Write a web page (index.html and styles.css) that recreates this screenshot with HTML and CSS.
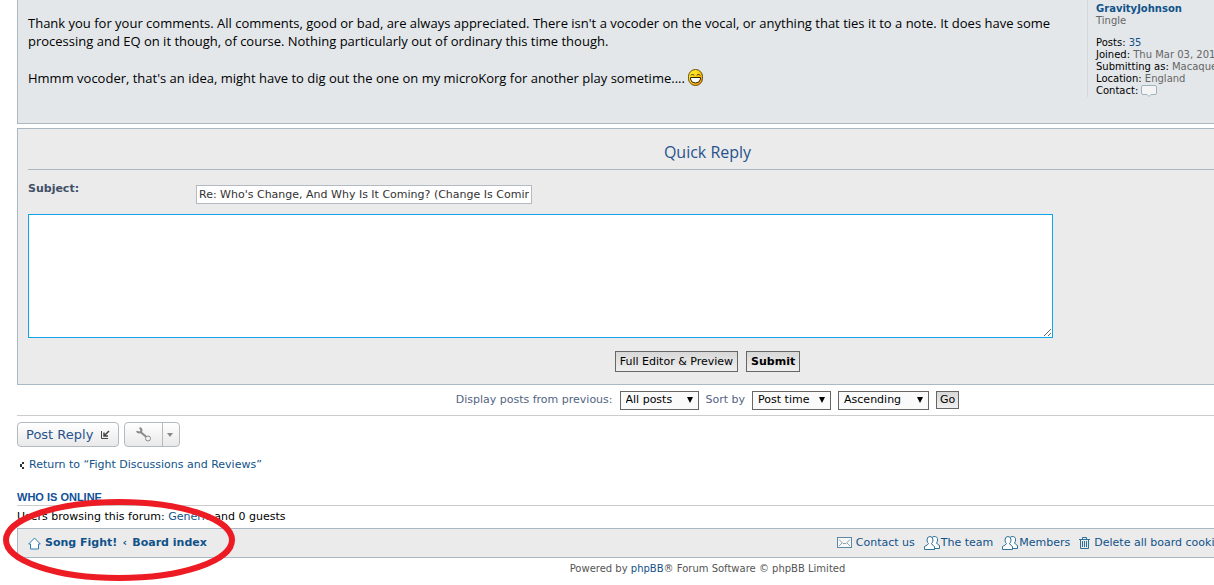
FILE: index.html
```html
<!DOCTYPE html>
<html lang="en">

<head>
    <meta charset="UTF-8">
    <meta name="viewport" content="width=device-width, initial-scale=1.0">
    <title>Song Fight! - View topic</title>
    <link rel="stylesheet" href="styles.css">
</head>

<body>
    <div class="wrap">
        <div class="post">
            <div class="postbody">
                <p>Thank you for your comments. All comments, good or bad, are always appreciated. There isn't a vocoder on the vocal, or anything that ties it to a note. It does have some<br>
                    processing and EQ on it though, of course. Nothing particularly out of ordinary this time though.</p>
                <p>Hmmm vocoder, that's an idea, might have to dig out the one on my microKorg for another play sometime....
                    <svg class="smiley" width="15" height="17" viewBox="0 0 15 17">
                        <defs>
                            <linearGradient id="face" x1="0" y1="0" x2="1" y2="1">
                                <stop offset="0.3" stop-color="#ffe620" />
                                <stop offset="1" stop-color="#f08a00" />
                            </linearGradient>
                        </defs>
                        <rect x="0.5" y="0.5" width="14" height="16" rx="7" fill="url(#face)" stroke="#6b4a10" />
                        <path d="M3 6.5L4.5 5L6 6.5M9 6.5L10.500 5L12 6.500" fill="none" stroke="#222" />
                        <path d="M2.500 8.500H12.500V10Q12 14 7.500 14T2.500 10Z" fill="#fff" stroke="#332200" />
                    </svg>
                </p>
            </div>
            <dl class="profile">
                <dt><a href="#" class="username">GravityJohnson</a></dt>
                <dd class="rank">Tingle</dd>
                <dd><b>Posts:</b> <a href="#">35</a></dd>
                <dd><b>Joined:</b> Thu Mar 03, 2016</dd>
                <dd><b>Submitting as:</b> Macaque</dd>
                <dd><b>Location:</b> England</dd>
                <dd><b>Contact:</b>
                    <a href="#" aria-label="Contact GravityJohnson"><svg class="bubble" width="16" height="12" viewBox="0 0 16 12">
                            <path d="M2 0.500H14Q15.500 0.500 15.500 2V8Q15.500 9.500 14 9.500H10L8 11.500L6 9.500H2Q0.500 9.500 0.500 8V2Q0.500 0.500 2 0.500Z" fill="#f4f4f4" stroke="#9db3c0" />
                        </svg></a>
                </dd>
            </dl>
        </div>

        <form class="panel">
            <h2>Quick Reply</h2>
            <div class="subject">
                <label for="subject">Subject:</label>
                <input type="text" id="subject" value="Re: Who's Change, And Why Is It Coming? (Change Is Coming)">
            </div>
            <textarea class="message" aria-label="Message"></textarea>
            <div class="buttons">
                <button type="button">Full Editor &amp; Preview</button>
                <button type="submit" class="submit">Submit</button>
            </div>
        </form>

        <form class="sort">
            <label for="days">Display posts from previous:</label>
            <span class="select"><select id="days" class="short">
                    <option>All posts</option>
                </select></span>
            <label for="key">Sort by</label>
            <span class="select"><select id="key" class="short">
                    <option>Post time</option>
                </select></span>
            <span class="select"><select class="long" aria-label="Order">
                    <option>Ascending</option>
                </select></span>
            <button type="button">Go</button>
        </form>

        <div class="actions">
            <button type="button" class="reply">Post Reply
                <svg width="10" height="10" viewBox="0 0 10 10">
                    <path d="M1.500 1V8.500H8" fill="none" stroke="#444" />
                    <path d="M9 1L4 6M4 2.500V6H8" fill="none" stroke="#444" stroke-width="1.500" />
                </svg>
            </button>
            <button type="button" class="tools" aria-label="Topic tools">
                <span class="wrench"><svg width="16" height="15" viewBox="0 0 16 15">
                        <path d="M4 4.500L11 10.500" stroke="#8a8a8a" stroke-width="2" />
                        <path d="M3.500 1Q5.500 1.500 5.500 3.500Q5 5.500 3 5.500Q1.500 5.500 1 4" fill="none" stroke="#8a8a8a" stroke-width="2" />
                        <circle cx="12" cy="11.500" r="2.500" fill="#f4f4f4" stroke="#8a8a8a" stroke-width="1" />
                    </svg></span>
                <span class="caret"></span>
            </button>
        </div>

        <a href="#" class="return"><svg width="4" height="7" viewBox="0 0 4 7">
                <path d="M2 0H4V2H2ZM0 2H2V5H0ZM2 5H4V7H2Z" fill="#333" />
            </svg>Return to “Fight Discussions and Reviews”</a>

        <h3>Who is online</h3>
        <p class="online">Users browsing this forum: <a href="#">Generic</a> and 0 guests</p>

        <div class="navbar">
            <a href="#" class="crumb"><svg width="13" height="13" viewBox="0 0 13 13">
                    <path d="M6.500 1L12.300 7H10.500V12H2.500V7H0.700Z" fill="#fff" stroke="#2a80b0" stroke-linejoin="round" />
                </svg>Song Fight!</a>
            <span class="sep">‹</span>
            <a href="#" class="crumb">Board index</a>
            <ul class="links">
                <li><a href="#"><svg width="15" height="12" viewBox="0 0 15 12">
                            <rect x="0.500" y="0.500" width="14" height="10" fill="#f8f8f8" stroke="#5b8aa8" />
                            <path d="M2 2.500L6 6.500H9L13 2.500M2 9L5 6M13 9L10 6" fill="none" stroke="#8fa5b3" />
                        </svg>Contact us</a></li>
                <li><a href="#" class="tight"><svg width="16" height="14" viewBox="0 0 16 14">
                            <g fill="#fff" stroke="#2f7299">
                                <path d="M10 0.500Q14 0.500 13.500 4Q13.500 6 12.500 7Q13 8 15.500 9.500V12.500H9L7 6Q6.500 1 10 0.500Z" />
                                <path d="M6 0.500Q9 0.500 9 4Q9 6.500 7.500 7.500Q8 9 10.500 10.500V13.500H0.500V10.500Q4 9 4.500 7.500Q3 6.500 3 4Q3 0.500 6 0.500Z" />
                            </g>
                        </svg>The team</a></li>
                <li><a href="#" class="tight"><svg width="16" height="14" viewBox="0 0 16 14">
                            <g fill="#fff" stroke="#2f7299">
                                <path d="M10 0.500Q14 0.500 13.500 4Q13.500 6 12.500 7Q13 8 15.500 9.500V12.500H9L7 6Q6.500 1 10 0.500Z" />
                                <path d="M6 0.500Q9 0.500 9 4Q9 6.500 7.500 7.500Q8 9 10.500 10.500V13.500H0.500V10.500Q4 9 4.500 7.500Q3 6.500 3 4Q3 0.500 6 0.500Z" />
                            </g>
                        </svg>Members</a></li>
                <li><a href="#"><svg width="11" height="12" viewBox="0 0 11 12">
                            <path d="M0 2.500H11M3.500 2V0.500H7.500V2M1.500 3V11.500H9.500V3M3.500 4V10M5.500 4V10M7.500 4V10" fill="none" stroke="#2f7299" />
                        </svg>Delete all board cookies</a></li>
            </ul>
        </div>
        <p class="copyright">Powered by <a href="#">phpBB</a>® Forum Software © phpBB Limited</p>
    </div>

    <!-- red marker round the breadcrumbs -->
    <svg class="marker" width="234" height="84" viewBox="0 0 234 84">
        <ellipse cx="117" cy="42" rx="113" ry="38" fill="none" stroke="#ed1c24" stroke-width="6" />
    </svg>
</body>

</html>
```
FILE: styles.css
```css
* {
    box-sizing: border-box;
}

body {
    position: relative;
    margin: 0;
    overflow: hidden;
    background: #fff;
    color: #536482;
    font: 11px/14px Verdana, "DejaVu Sans", sans-serif;
}

/* the board is wider than the window */
.wrap {
    margin: 0 -184px 0 17px;
}

a {
    color: #105289;
    text-decoration: none;
}

p,
h2,
h3,
dl,
dd,
ul {
    margin: 0;
    padding: 0;
}

button,
input,
select,
textarea {
    margin: 0;
    font: inherit;
}

.post {
    display: flex;
    justify-content: space-between;
    height: 124px;
    padding: 0 10px;
    background: #e3e7ea;
    border: 1px solid #a9b8c2;
    border-top: 0;
}

.postbody {
    padding-top: 14px;
    color: #000;
    font: 13px/18px "Trebuchet MS", "Open Sans", sans-serif;
    white-space: nowrap;
}

.postbody p {
    margin-bottom: 19px;
}

.smiley {
    vertical-align: -3px;
}

.profile {
    flex: 0 0 300px;
    height: 97px;
    padding: 3px 0 0 8px;
    border-left: 1px solid #d3dade;
    color: #666;
    font-size: 10px;
    line-height: 12px;
}

.profile b {
    color: #000;
    font-weight: normal;
}

.profile .username {
    font-weight: bold;
}

.rank {
    margin-bottom: 10px;
}

.bubble {
    vertical-align: -3px;
}

.panel {
    margin-top: 4px;
    padding: 12px 10px;
    background: #ebebeb;
    border: 1px solid #a9b8c2;
}

.panel h2 {
    padding-bottom: 6px;
    border-bottom: 1px solid #a9b8c2;
    color: #28538c;
    font: 16px/22px "Trebuchet MS", "Open Sans", sans-serif;
    text-align: center;
}

.subject {
    display: flex;
    align-items: flex-start;
    padding: 12px 0 10px;
}

.subject label {
    width: 168px;
    color: #425067;
    font-weight: bold;
}

.subject input {
    width: 336px;
    height: 19px;
    margin-top: 3px;
    padding: 2px;
    border: 1px solid #b4bac0;
    color: #333;
}

.message {
    display: block;
    width: 100%;
    max-width: 1025px;
    height: 124px;
    border: 1px solid #11a3ea;
    outline: 0;
}

.buttons {
    display: flex;
    justify-content: center;
    gap: 8px;
    padding-top: 13px;
}

.buttons button,
.sort button {
    height: 21px;
    padding: 0 4px;
    background: linear-gradient(#d8d8d8, #efefef);
    border: 1px solid #666;
    color: #000;
}

.buttons .submit {
    font-weight: bold;
}

.sort {
    display: flex;
    justify-content: center;
    align-items: center;
    gap: 7px;
    height: 31px;
    border-bottom: 1px solid #ccc;
}

.sort button {
    height: 18px;
    padding: 0 3px;
}

.select {
    position: relative;
}

.select::after {
    content: "";
    position: absolute;
    right: 6px;
    top: 6px;
    border: solid transparent;
    border-width: 6px 3px 0;
    border-top-color: #000;
}

.select select {
    display: block;
    height: 19px;
    padding: 0 5px;
    appearance: none;
    background: #fafafa;
    border: 1px solid #666;
    border-radius: 0;
    color: #000;
}

.select .short {
    width: 79px;
}

.select .long {
    width: 91px;
}

.actions {
    display: flex;
    gap: 5px;
    padding: 6px 0 11px;
}

.actions button {
    display: flex;
    align-items: center;
    height: 25px;
    padding: 0 8px;
    background: linear-gradient(#fff, #e9e9e9);
    border: 1px solid #b4bac0;
    border-radius: 4px;
}

.actions .reply {
    justify-content: space-between;
    width: 102px;
    color: #28538c;
    font-size: 13px;
}

.actions .tools {
    width: 56px;
    padding: 0;
}

.wrench {
    display: flex;
    align-items: center;
    justify-content: center;
    width: 38px;
    height: 23px;
    border-right: 1px solid #b4bac0;
}

.caret {
    margin-left: 4px;
    border: solid transparent;
    border-width: 4px 3px 0;
    border-top-color: #8a8a8a;
}

.return {
    display: flex;
    align-items: center;
    gap: 5px;
    padding-left: 3px;
}

h3 {
    margin-top: 18px;
    padding-bottom: 1px;
    border-bottom: 1px solid #ccc;
    color: #115098;
    font: bold 11px/14px Arial, "Liberation Sans", sans-serif;
    text-transform: uppercase;
}

.online {
    padding: 4px 0;
    color: #000;
}

.navbar {
    display: flex;
    align-items: center;
    height: 30px;
    padding: 0 10px;
    background: #ebebeb;
    border: 1px solid #a9b8c2;
}

.navbar a {
    display: flex;
    align-items: center;
    gap: 4px;
}

.navbar .tight {
    gap: 1px;
}

.navbar .crumb {
    font-weight: bold;
}

.sep {
    width: 15px;
    color: #105289;
    font-weight: bold;
    text-align: center;
}

.links {
    display: flex;
    gap: 9px;
    margin-left: 630px;
    list-style: none;
    white-space: nowrap;
}

.copyright {
    padding: 4px 0 10px;
    color: #555;
    font-size: 10px;
    text-align: center;
}

.marker {
    position: absolute;
    left: 2px;
    top: 498px;
}
```
